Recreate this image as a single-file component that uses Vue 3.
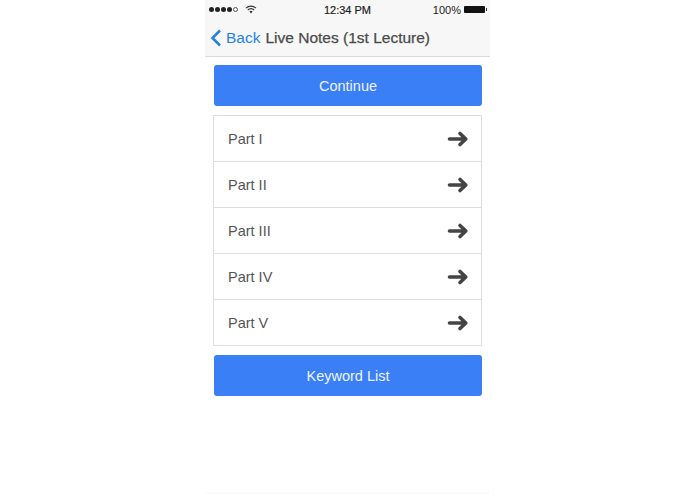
<script setup>
const parts = ['Part I', 'Part II', 'Part III', 'Part IV', 'Part V']
</script>

<template>
  <div class="page">
    <div class="phone">
      <header class="head">
        <div class="status">
          <div class="left">
            <span class="dots">
              <i class="dot"></i><i class="dot"></i><i class="dot"></i><i class="dot"></i><i class="dot empty"></i>
            </span>
            <svg class="wifi" width="12" height="9" viewBox="0 0 12 9">
              <path d="M1 3.200a7 7 0 0 1 10 0M2.800 5a4.400 4.400 0 0 1 6.400 0" fill="none" stroke="#333" stroke-width="1.100" />
              <path d="M4.400 6.600a2.200 2.200 0 0 1 3.200 0L6 8.400z" fill="#333" />
            </svg>
          </div>
          <div class="time">12:34 PM</div>
          <div class="right">
            <span>100%</span>
            <span class="battery"><i class="cap"></i></span>
          </div>
        </div>
        <div class="nav">
          <svg class="chev" width="12" height="18" viewBox="0 0 12 18">
            <path d="M10 1.500 2.500 9l7.500 7.500" fill="none" stroke="#1f82ea" stroke-width="2.500" />
          </svg>
          <span class="back">Back</span>
          <span class="title">Live Notes (1st Lecture)</span>
        </div>
      </header>

      <main class="content">
        <button class="btn">Continue</button>
        <ul class="list">
          <li v-for="p in parts" :key="p" class="row">
            <span>{{ p }}</span>
            <svg width="22" height="18" viewBox="0 0 22 18">
              <path d="M2.500 9h15M13 3.500 18.800 9 13 14.500" fill="none" stroke="#444" stroke-width="3.600" stroke-linecap="round" stroke-linejoin="round" />
            </svg>
          </li>
        </ul>
        <button class="btn">Keyword List</button>
      </main>
    </div>
  </div>
</template>

<style scoped>
.page {
  width: 695px;
  height: 494px;
  background: #fff;
  display: flex;
  justify-content: center;
  overflow: hidden;
  font-family: "Liberation Sans", Arial, sans-serif;
}
.phone {
  width: 285px;
  height: 494px;
  border-bottom: 1px solid #f6f6f6;
  box-sizing: border-box;
}
.head {
  background: #f7f7f7;
  border-bottom: 1px solid #d9d9d9;
  height: 57px;
  box-sizing: border-box;
}
.status {
  height: 19px;
  display: grid;
  grid-template-columns: 1fr auto 1fr;
  align-items: center;
  font-size: 11px;
  color: #222;
  padding: 0 4px;
}
.left { display: flex; align-items: center; gap: 7px; }
.dots { display: flex; gap: 1px; }
.dot { width: 5px; height: 5px; border-radius: 50%; background: #222; box-sizing: border-box; }
.dot.empty { background: none; border: 1px solid #555; }
.time { -webkit-text-stroke: 0.2px #222; }
.right { display: flex; justify-content: flex-end; align-items: center; gap: 3px; }
.battery {
  width: 21px;
  height: 7px;
  background: #111;
  position: relative;
  margin-right: 1px;
  border-radius: 1px;
}
.cap {
  position: absolute;
  right: -2px;
  top: 2px;
  width: 1px;
  height: 3px;
  background: #333;
}
.nav {
  height: 37px;
  display: flex;
  align-items: center;
  padding-left: 5px;
  font-size: 15.5px;
}
.chev { margin-right: 4px; }
.back { color: #1f82ea; margin-right: 5px; }
.title { color: #4a4a4a; -webkit-text-stroke: 0.25px #4a4a4a; }
.content {
  padding: 8px 8px 0;
  display: flex;
  flex-direction: column;
  align-items: stretch;
}
.btn {
  height: 41px;
  margin-left: 1px;
  border: none;
  border-radius: 3px;
  background: #3a7ff6;
  color: #eef4ff;
  font: 14.5px "Liberation Sans", Arial, sans-serif;
  padding: 0;
}
.list {
  list-style: none;
  margin: 9px 0;
  padding: 0;
  border: 1px solid #dedede;
  box-sizing: border-box;
  height: 231px;
}
.row {
  height: 46px;
  box-sizing: border-box;
  display: flex;
  align-items: center;
  justify-content: space-between;
  padding: 0 12px 0 14px;
  font-size: 14.5px;
  color: #555;
  border-top: 1px solid #dedede;
}
.row:first-child { border-top: none; height: 45px; }
</style>

<style>
html, body { background: #fff; }
</style>
